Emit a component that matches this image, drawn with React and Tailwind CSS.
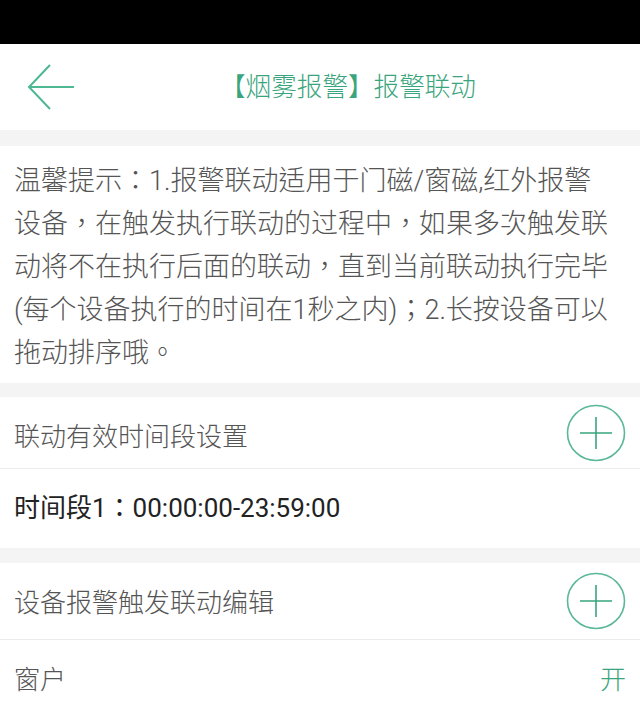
import React from 'react';

const FONT = { fontFamily: 'Roboto, "Noto Sans CJK TC", "Noto Sans CJK SC", sans-serif' };

function PlusCircle() {
  return (
    <svg width="60" height="58" viewBox="0 0 60 58" fill="none">
      <ellipse cx="30" cy="29" rx="28.5" ry="27.5" stroke="#5bb896" strokeWidth="1.6" />
      <path d="M14 29 H46 M30 13 V45" stroke="#3aa57c" strokeWidth="1.6" />
    </svg>
  );
}

function SectionRow({ title, height, offset }) {
  return (
    <div className={`flex ${height} items-center justify-between border-b border-[#ececec] pl-[14px] pr-[14px]`}>
      <span className={`${offset} text-[26px] font-light text-[#555]`}>{title}</span>
      <PlusCircle />
    </div>
  );
}

export default function App() {
  return (
    <div className="min-h-[706px] w-[640px] bg-[#f4f4f4]" style={FONT}>
      {/* status bar */}
      <div className="h-[44px] bg-black" />

      {/* header */}
      <header className="flex h-[86px] items-center bg-white">
        <button className="flex h-full w-[90px] items-center pl-[27px]">
          <svg width="48" height="48" viewBox="0 0 48 48" fill="none">
            <path d="M47 24 H2 M23 2 L2 24 L23 46" stroke="#4db891" strokeWidth="2" />
          </svg>
        </button>
        <h1 className="ml-[130px] text-[25.6px] font-light text-[#3aa57c]">【烟雾报警】报警联动</h1>
      </header>

      {/* tip */}
      <div className="mt-[16px] bg-white pb-[8px] pl-[14px] pr-[30px] pt-[14px]">
        <p className="text-[27px] font-light leading-[43px] text-[#555]">
          温馨提示：1.报警联动适用于门磁/窗磁,红外报警设备，在触发执行联动的过程中，如果多次触发联动将不在执行后面的联动，直到当前联动执行完毕(每个设备执行的时间在1秒之内)；2.长按设备可以拖动排序哦。
        </p>
      </div>

      {/* time range */}
      <div className="mt-[14px] bg-white">
        <SectionRow title="联动有效时间段设置" height="h-[72px]" offset="pt-[9px]" />
        <div className="flex h-[79px] items-center pl-[14px]">
          <span className="text-[26px] text-[#222]">时间段1：00:00:00-23:59:00</span>
        </div>
      </div>

      {/* device linkage */}
      <div className="mt-[15px] bg-white">
        <SectionRow title="设备报警触发联动编辑" height="h-[77px]" offset="pt-[4px]" />
        <div className="flex h-[80px] items-center justify-between pl-[14px] pr-[14px]">
          <span className="text-[26px] font-light text-[#555]">窗户</span>
          <span className="text-[26px] font-light text-[#3aa57c]">开</span>
        </div>
      </div>
    </div>
  );
}
